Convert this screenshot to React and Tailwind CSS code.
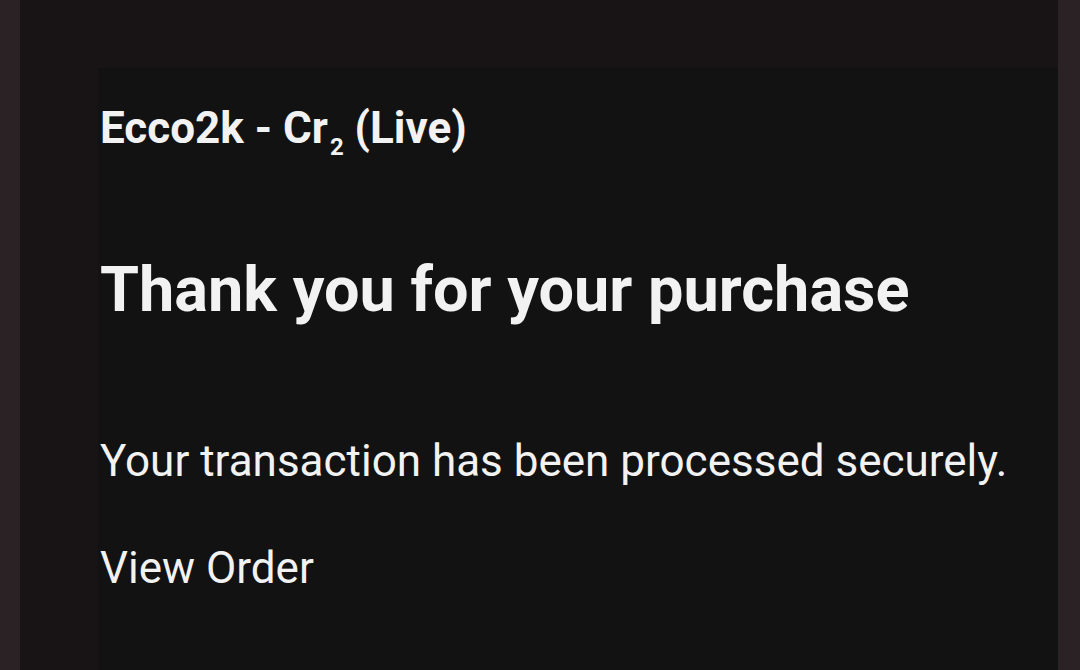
export default function App() {
  return (
    <div
      className="flex h-[670px] w-[1080px] overflow-hidden bg-[#181314] text-[#f2f2f2]"
      style={{ fontFamily: 'Roboto, "Noto Sans", sans-serif' }}
    >
      <div className="w-[20px] shrink-0 bg-[#2a2225]" />
      <div className="flex flex-1 flex-col pt-[68px] pl-[78px]">
        {/* receipt card */}
        <div className="flex flex-1 flex-col bg-[#121212] pl-[2px] pt-[38px]">
          <h2 className="text-[44px] font-bold leading-none">
            Ecco2k - Cr<sub className="ml-[2px] text-[24px] leading-none align-[-6px]">2</sub> (Live)
          </h2>
          <h1 className="mt-[105px] text-[63px] font-bold leading-none">
            Thank you for your purchase
          </h1>
          <p className="mt-[118px] text-[44px] leading-none">
            Your transaction has been processed securely.
          </p>
          <p className="mt-[63px] text-[44px] leading-none">View Order</p>
        </div>
      </div>
      <div className="w-[22px] shrink-0 bg-[#2a2225]" />
    </div>
  )
}
